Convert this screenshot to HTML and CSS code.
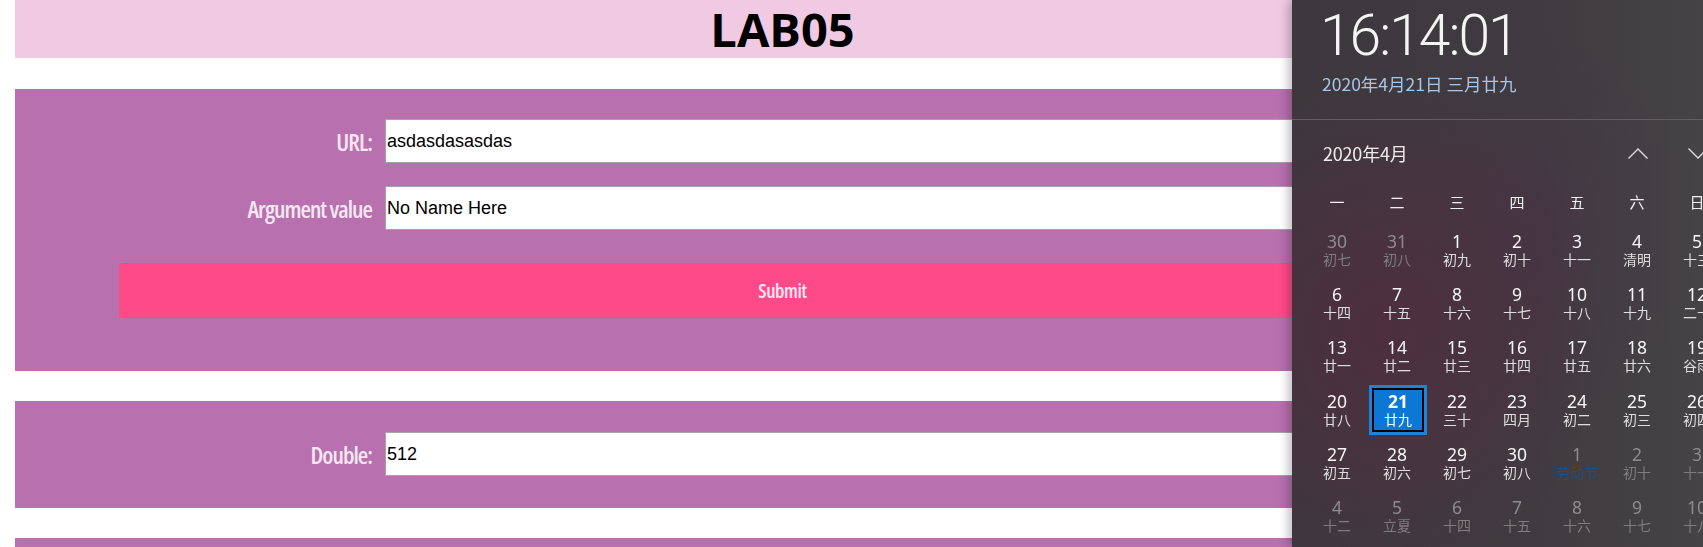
FILE: index.html
```html
<!DOCTYPE html>
<html lang="zh-CN">
<head>
<meta charset="utf-8">
<title>LAB05</title>
<link rel="stylesheet" href="styles.css">
</head>
<body>
<div class="page">
  <header class="header"><h1 class="title">LAB05</h1></header>

  <section class="card card-first">
    <div class="row">
      <label class="label">URL:</label>
      <input class="field" type="text" value="asdasdasasdas">
    </div>
    <div class="row row-second">
      <label class="label">Argument value</label>
      <input class="field" type="text" value="No Name Here">
    </div>
    <button class="submit" type="button">Submit</button>
  </section>

  <section class="card card-double">
    <div class="row">
      <label class="label">Double:</label>
      <input class="field" type="text" value="512">
    </div>
  </section>

  <section class="card card-third"></section>
</div>

<aside class="flyout">
  <div class="clock">
    <div class="time">16:14:01</div>
    <div class="date">2020年4月21日 三月廿九</div>
  </div>
  <div class="sep"></div>
  <div class="month-bar">
    <div class="month">2020年4月</div>
    <div class="nav">
      <svg class="chev" width="20" height="11" viewBox="0 0 20 11"><polyline points="0.5,10.5 10,1 19.5,10.5" fill="none" stroke="#dcdcdc" stroke-width="1.4"/></svg>
      <svg class="chev" width="20" height="11" viewBox="0 0 20 11"><polyline points="0.5,0.5 10,10 19.5,0.5" fill="none" stroke="#dcdcdc" stroke-width="1.4"/></svg>
    </div>
  </div>
  <div class="weekdays">
    <span>一</span><span>二</span><span>三</span><span>四</span><span>五</span><span>六</span><span>日</span>
  </div>
  <div class="days">
    <div class="day out"><b>30</b><i>初七</i></div>
    <div class="day out"><b>31</b><i>初八</i></div>
    <div class="day"><b>1</b><i>初九</i></div>
    <div class="day"><b>2</b><i>初十</i></div>
    <div class="day"><b>3</b><i>十一</i></div>
    <div class="day"><b>4</b><i>清明</i></div>
    <div class="day"><b>5</b><i>十三</i></div>

    <div class="day"><b>6</b><i>十四</i></div>
    <div class="day"><b>7</b><i>十五</i></div>
    <div class="day"><b>8</b><i>十六</i></div>
    <div class="day"><b>9</b><i>十七</i></div>
    <div class="day"><b>10</b><i>十八</i></div>
    <div class="day"><b>11</b><i>十九</i></div>
    <div class="day"><b>12</b><i>二十</i></div>

    <div class="day"><b>13</b><i>廿一</i></div>
    <div class="day"><b>14</b><i>廿二</i></div>
    <div class="day"><b>15</b><i>廿三</i></div>
    <div class="day"><b>16</b><i>廿四</i></div>
    <div class="day"><b>17</b><i>廿五</i></div>
    <div class="day"><b>18</b><i>廿六</i></div>
    <div class="day"><b>19</b><i>谷雨</i></div>

    <div class="day"><b>20</b><i>廿八</i></div>
    <div class="day today"><b>21</b><i>廿九</i></div>
    <div class="day"><b>22</b><i>三十</i></div>
    <div class="day"><b>23</b><i>四月</i></div>
    <div class="day"><b>24</b><i>初二</i></div>
    <div class="day"><b>25</b><i>初三</i></div>
    <div class="day"><b>26</b><i>初四</i></div>

    <div class="day"><b>27</b><i>初五</i></div>
    <div class="day"><b>28</b><i>初六</i></div>
    <div class="day"><b>29</b><i>初七</i></div>
    <div class="day"><b>30</b><i>初八</i></div>
    <div class="day out holiday"><b>1</b><i>劳动节</i></div>
    <div class="day out"><b>2</b><i>初十</i></div>
    <div class="day out"><b>3</b><i>十一</i></div>

    <div class="day out"><b>4</b><i>十二</i></div>
    <div class="day out"><b>5</b><i>立夏</i></div>
    <div class="day out"><b>6</b><i>十四</i></div>
    <div class="day out"><b>7</b><i>十五</i></div>
    <div class="day out"><b>8</b><i>十六</i></div>
    <div class="day out"><b>9</b><i>十七</i></div>
    <div class="day out"><b>10</b><i>十八</i></div>
  </div>
</aside>
</body>
</html>
```

FILE: styles.css
```css
html, body {
  margin: 0;
  padding: 0;
  background: #ffffff;
  overflow: hidden;
}

.page {
  width: 1535px;
  margin-left: 15px;
}

.header {
  background: #f0cae2;
  height: 58px;
}

.title {
  margin: 0;
  text-align: center;
  font-family: "Open Sans", "Noto Sans", sans-serif;
  font-weight: 700;
  font-size: 47px;
  line-height: 58px;
  color: #000;
}

.card {
  background: #b870ae;
  margin-top: 30px;
  padding: 0 104px;
  box-sizing: border-box;
}

.card-first {
  margin-top: 31px;
  padding-top: 30px;
  padding-bottom: 53px;
}

.card-double {
  padding-top: 31px;
  padding-bottom: 32px;
}

.card-third {
  height: 120px;
}

.row {
  display: flex;
  align-items: center;
  height: 44px;
}

.row-second {
  margin-top: 23px;
}

.label {
  width: 253px;
  margin-right: 13px;
  text-align: right;
  font-family: "Open Sans", "Noto Sans", sans-serif;
  font-stretch: 75%;
  font-weight: 600;
  font-size: 24px;
  letter-spacing: -1px;
  color: #f5e6f1;
  white-space: nowrap;
}

.field {
  flex: 1;
  height: 44px;
  box-sizing: border-box;
  border: 1px solid #a7a2a7;
  padding: 0 1px;
  margin: 0;
  background: #fff;
  font-family: "Liberation Sans", Arial, sans-serif;
  font-size: 18px;
  color: #000;
  outline: none;
}

.submit {
  display: block;
  width: 100%;
  height: 55px;
  margin-top: 33px;
  border: 0;
  padding: 0;
  background: #ff4a8a;
  font-family: "Open Sans", "Noto Sans", sans-serif;
  font-stretch: 75%;
  font-weight: 600;
  font-size: 19.5px;
  letter-spacing: -0.4px;
  color: #fde8f4;
}

/* Windows clock flyout */
.flyout {
  position: fixed;
  top: 0;
  left: 1292px;
  width: 411px;
  height: 547px;
  overflow: hidden;
  box-sizing: border-box;
  background:
    radial-gradient(ellipse 220px 260px at 90px 330px, rgba(96, 34, 62, 0.45), rgba(96, 34, 62, 0) 100%),
    radial-gradient(ellipse 160px 200px at 250px 230px, rgba(80, 40, 80, 0.25), rgba(80, 40, 80, 0) 100%),
    linear-gradient(90deg, #3d383d 0%, #403b40 60%, #454345 100%);
  box-shadow: -3px 0 10px rgba(0, 0, 0, 0.28);
  font-family: "Noto Sans", "Noto Sans CJK SC", sans-serif;
  color: #f2f2f2;
}

.clock {
  padding-top: 3px;
  padding-left: 28px;
}

.time {
  font-family: Roboto, "Noto Sans", sans-serif;
  font-weight: 300;
  font-size: 57px;
  line-height: 66px;
  letter-spacing: -2px;
  color: #f4f4f4;
}

.date {
  margin-top: 4px;
  padding-left: 2px;
  font-family: "Noto Sans CJK SC", sans-serif;
  font-size: 17.5px;
  line-height: 22px;
  color: #a3c6ea;
}

.sep {
  margin-top: 24px;
  height: 1px;
  background: #625d62;
}

.month-bar {
  display: flex;
  align-items: center;
  justify-content: space-between;
  height: 24px;
  margin-top: 21px;
  padding-left: 31px;
  margin-right: -5px;
}

.month {
  font-family: "Noto Sans CJK SC", sans-serif;
  font-size: 18px;
  line-height: 24px;
  letter-spacing: -0.2px;
  color: #ececec;
}

.nav {
  display: flex;
  gap: 40px;
  align-items: center;
}

.chev {
  display: block;
}

.weekdays {
  display: grid;
  grid-template-columns: repeat(7, 60px);
  margin-top: 27px;
  padding-left: 15px;
  font-family: "Noto Sans CJK SC", sans-serif;
  font-size: 15px;
  line-height: 20px;
  color: #f0f0f0;
  text-align: center;
}

.days {
  display: grid;
  grid-template-columns: repeat(7, 60px);
  grid-auto-rows: 53.2px;
  margin-top: 13px;
  padding-left: 15px;
}

.day {
  display: flex;
  flex-direction: column;
  align-items: center;
  justify-content: center;
  width: 58px;
  height: 50px;
  margin-left: 1px;
  box-sizing: border-box;
}

.day b {
  font-weight: 400;
  font-family: "Noto Sans", sans-serif;
  font-size: 17.5px;
  line-height: 18px;
  color: #f6f6f6;
}

.day i {
  font-style: normal;
  font-family: "Noto Sans CJK SC", sans-serif;
  font-size: 14px;
  line-height: 18px;
  color: #dedede;
}

.day.out b {
  color: #8e8b8e;
}

.day.out i {
  color: #7f7c7f;
}

.day.holiday i {
  color: #1e4f7e;
}

.day.today {
  background: #0a78d4;
  border: 3px solid #1e82d8;
  box-shadow: inset 0 0 0 2px #000;
  margin-left: 2px;
}

.day.today b {
  font-weight: 700;
  color: #ffffff;
}

.day.today i {
  color: #ffffff;
}
```
